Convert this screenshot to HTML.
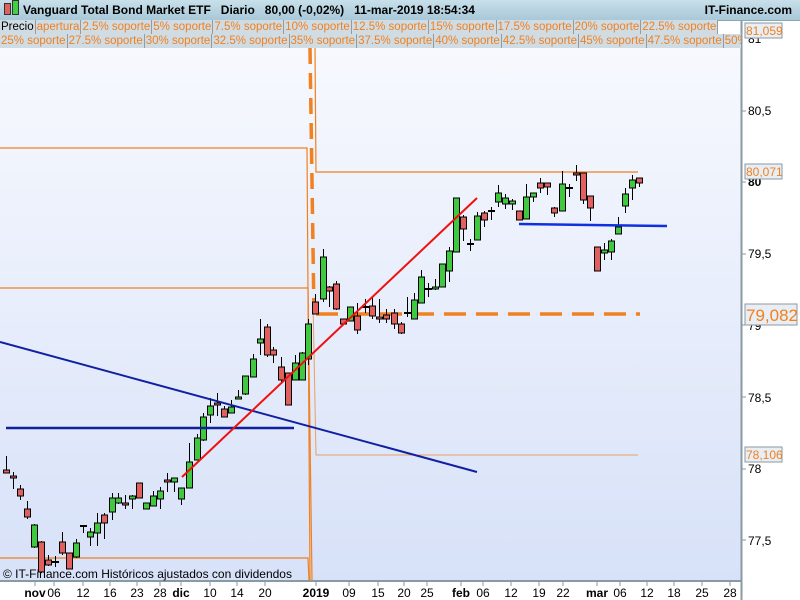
<!DOCTYPE html>
<html><head><meta charset="utf-8"><style>
body{margin:0;width:800px;height:600px;overflow:hidden;font-family:"Liberation Sans",sans-serif;background:#fff}
#t{position:absolute;left:0;top:0;width:800px;height:20px;background:linear-gradient(#c8e0ea,#a8c8d8);border-bottom:1px solid #8aa;font-size:12px;font-weight:bold;line-height:20px}
.r{position:absolute;left:0;height:14px;font-size:11.5px;line-height:14px;white-space:nowrap}
.r span{display:inline-block;background:#d0dce4;border-right:1px solid #999;border-bottom:1px solid #999;color:#f08020;padding:0 1px}
</style></head><body>
<svg width="800" height="600" style="position:absolute;left:0;top:0">
<defs><linearGradient id="bg" x1="0" y1="0" x2="0" y2="1"><stop offset="0" stop-color="#f7f9fe"/><stop offset="1" stop-color="#d7e1f8"/></linearGradient></defs>
<rect x="0" y="48" width="741" height="532" fill="url(#bg)"/>
<rect x="741" y="20" width="59" height="580" fill="#fff"/>
<rect x="0" y="580" width="741" height="20" fill="#fff"/>
<line x1="741.5" y1="20" x2="741.5" y2="600" stroke="#8a9aa4" stroke-width="2"/>
<line x1="0" y1="581" x2="741" y2="581" stroke="#8a9aa4" stroke-width="2"/>
<g stroke="#f08020" stroke-width="1.2" fill="none">
<polyline points="0,148 307,148 310,580"/>
<polyline points="0,288 308,288 312,580"/>
<polyline points="0,558 308,558 309,580"/>
<polyline points="315,48 316,172 638,172"/>
</g>
<polyline points="313,300 316,455 638,455" stroke="#e8a060" stroke-width="1" fill="none"/>
<line x1="310" y1="48" x2="314" y2="314" stroke="#f08020" stroke-width="3.5" stroke-dasharray="16,9"/>
<line x1="316" y1="314" x2="640" y2="314" stroke="#f08020" stroke-width="3.5" stroke-dasharray="22,10"/>
<g id="c"></g>
<line x1="0" y1="342" x2="477" y2="472" stroke="#1020a0" stroke-width="2"/>
<line x1="6" y1="428" x2="294" y2="428" stroke="#1020a0" stroke-width="2.5"/>
<line x1="182" y1="477" x2="477" y2="198" stroke="#f01010" stroke-width="2"/>
<line x1="519" y1="224" x2="667" y2="226" stroke="#1030e0" stroke-width="2.5"/>
<g font-size="12" fill="#000">
<text x="748" y="115">80,5</text><text x="748" y="186" font-weight="bold">80</text><text x="748" y="258">79,5</text><text x="748" y="330">79</text><text x="748" y="402">78,5</text><text x="748" y="473">78</text><text x="748" y="545">77,5</text><text x="748" y="43">81</text>
</g>
<g stroke="#8a9aa4"><line x1="741" y1="111" x2="746" y2="111"/><line x1="741" y1="182" x2="746" y2="182"/><line x1="741" y1="254" x2="746" y2="254"/><line x1="741" y1="325" x2="746" y2="325"/><line x1="741" y1="397" x2="746" y2="397"/><line x1="741" y1="469" x2="746" y2="469"/><line x1="741" y1="540" x2="746" y2="540"/></g>
<g font-size="12" fill="#f08020">
<rect x="745" y="23" width="37" height="15" fill="#e8eef4" stroke="#8a9aa4"/><text x="746" y="35">81,059</text>
<rect x="745" y="164" width="37" height="15" fill="#e8eef4" stroke="#8a9aa4"/><text x="746" y="176">80,071</text>
<rect x="745" y="304" width="52" height="21" fill="#e8eef4" stroke="#8a9aa4"/><text x="746" y="321" font-size="17">79,082</text>
<rect x="745" y="447" width="37" height="15" fill="#e8eef4" stroke="#8a9aa4"/><text x="746" y="459">78,106</text>
</g>
<text x="3" y="578" font-size="12" fill="#000">© IT-Finance.com  Históricos ajustados con dividendos</text>
<g id="ax" font-size="12" fill="#000"></g>
</svg>
<div id="t"><span style="position:absolute;left:4px;top:3px;width:5px;height:10px;background:#e06060;border:1px solid #333"></span><span style="position:absolute;left:12px;top:0px;width:5px;height:13px;background:#40d040;border:1px solid #333"></span><span style="position:absolute;left:23px;white-space:pre">Vanguard Total Bond Market ETF   Diario   80,00 (-0,02%)   11-mar-2019 18:54:34</span><span style="position:absolute;right:8px">IT-Finance.com</span></div>
<div class="r" style="top:20px"><span style="color:#000">Precio</span><span>apertura</span><span>2.5% soporte</span><span>5% soporte</span><span>7.5% soporte</span><span>10% soporte</span><span>12.5% soporte</span><span>15% soporte</span><span>17.5% soporte</span><span>20% soporte</span><span>22.5% soporte</span></div>
<div class="r" style="top:34px;width:741px;overflow:hidden"><span>25% soporte</span><span>27.5% soporte</span><span>30% soporte</span><span>32.5% soporte</span><span>35% soporte</span><span>37.5% soporte</span><span>40% soporte</span><span>42.5% soporte</span><span>45% soporte</span><span>47.5% soporte</span><span>50% soporte</span></div>
<script>
var C=[[6,470,473,456,473],[13,476,478,472,489],[20,489,496,485,500],[27,509,517,501,519],[34,547,525,524,548],[41,542,572,541,573],[48,560,565,555,566],[55,562,562,556,567],[62,542,553,532,555],[69,553,569,553,569],[76,557,543,539,558],[83,526,526,526,533],[90,537,532,528,546],[97,533,523,513,546],[104,515,523,513,539],[112,512,498,493,520],[118,503,498,493,504],[125,503,505,495,509],[132,499,496,495,509],[139,483,498,483,498],[146,509,503,503,509],[153,506,496,491,506],[160,499,491,487,509],[167,480,482,473,492],[174,482,478,478,492],[181,499,488,488,505],[189,488,462,443,488],[197,460,438,434,460],[203,440,417,413,441],[210,415,406,398,423],[217,403,405,393,416],[224,409,417,406,417],[231,413,407,400,413],[238,399,397,390,399],[245,394,376,376,395],[253,377,359,354,377],[260,343,339,319,355],[267,327,355,324,357],[273,350,355,347,363],[281,367,380,357,382],[288,373,405,373,405],[295,380,363,355,380],[302,380,353,352,380],[308,359,324,319,365],
[315,302,314,294,314],[323,299,257,249,302],[329,287,291,286,307],[336,284,309,281,310],[343,319,324,319,324],[350,321,307,307,321],[357,316,330,303,334],[365,307,307,299,313],[372,306,316,297,319],[379,317,319,299,323],[386,315,319,309,323],[394,313,324,309,329],[401,324,333,322,334],[407,313,313,297,317],[414,319,300,293,319],[421,303,277,270,303],[428,289,289,283,297],[435,289,287,279,290],[442,287,264,264,287],[449,271,251,247,282],[456,252,198,198,252],[463,217,229,215,241],[470,244,244,239,251],[477,240,216,212,240],[484,213,220,211,227],[491,211,211,207,220],[498,202,193,185,207],[505,204,198,194,209],[512,204,201,199,210],[519,211,220,211,220],[526,219,197,184,219],[533,197,193,193,202],[540,183,188,178,193],[547,183,187,183,195],[554,208,213,207,217],[562,211,184,171,211],[569,188,188,184,197],[576,173,175,165,181],[583,173,200,173,204],[590,196,208,196,221],[597,247,271,247,271],[604,253,250,243,260],[611,252,241,239,260],[618,234,227,217,234],[625,206,194,188,213],[632,188,180,175,200],[639,178,183,178,187]];
var s='';C.forEach(function(c){var x=c[0],o=c[1],cl=c[2],t=Math.min(o,cl),b=Math.max(o,cl);s+='<line x1="'+(x+.5)+'" y1="'+c[3]+'" x2="'+(x+.5)+'" y2="'+c[4]+'" stroke="#000"/>';if(b-t<1){s+='<line x1="'+(x-3)+'" y1="'+t+'" x2="'+(x+4)+'" y2="'+t+'" stroke="#000" stroke-width="2"/>';}else s+='<rect x="'+(x-2.5)+'" y="'+t+'" width="6" height="'+(b-t)+'" fill="'+(cl<o?'#40c840':'#e06060')+'" stroke="#000"/>';});
document.getElementById('c').innerHTML=s;
var L=[['nov',35,1],['06',54],['12',83],['16',110],['23',137],['28',160],['dic',181,1],['10',210],['14',237],['20',265],['2019',316,1],['09',349],['15',378],['20',404],['25',427],['feb',461,1],['06',483],['12',511],['19',539],['22',563],['mar',597,1],['06',620],['12',647],['18',674],['25',702],['28',730]];
var a='';L.forEach(function(l){a+='<line x1="'+l[1]+'" y1="581" x2="'+l[1]+'" y2="586" stroke="#8a9aa4"/><text x="'+l[1]+'" y="597" text-anchor="middle"'+(l[2]?' font-weight="bold"':'')+'>'+l[0]+'</text>';});
document.getElementById('ax').innerHTML=a;
</script>
</body></html>
